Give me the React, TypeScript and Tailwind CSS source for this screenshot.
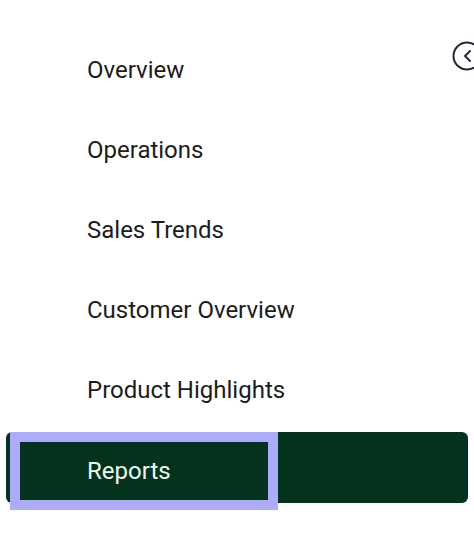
export default function App() {
  const items = ["Overview", "Operations", "Sales Trends", "Customer Overview", "Product Highlights"];
  return (
    <div className="relative w-[474px] h-[560px] bg-white overflow-hidden" style={{ fontFamily: "Roboto, sans-serif" }}>
      <svg className="absolute left-[452px] top-[41px]" width="30" height="30" viewBox="0 0 30 30" fill="none" stroke="#1f2937" strokeWidth="2" strokeLinecap="round" strokeLinejoin="round">
        <circle cx="15" cy="15" r="13.5" />
        <path d="M18 10l-5 5 5 5" />
      </svg>
      <div className="flex flex-col pt-[30px]">
        {items.map((t) => (
          <div key={t} className="h-[80px] flex items-center pl-[87px] text-[24px] text-[#1c1c1c]">{t}</div>
        ))}
        <div className="relative h-[80px]">
          <div className="absolute left-[6px] top-[2px] w-[462px] h-[71px] rounded-[6px] bg-[#03331d]" />
          <div className="absolute left-[10px] top-[2px] w-[268px] h-[78px] border-[10px] border-[#acacfb] flex items-center pl-[67px] text-[24px] text-[#eef7ee]">Reports</div>
        </div>
      </div>
    </div>
  );
}
